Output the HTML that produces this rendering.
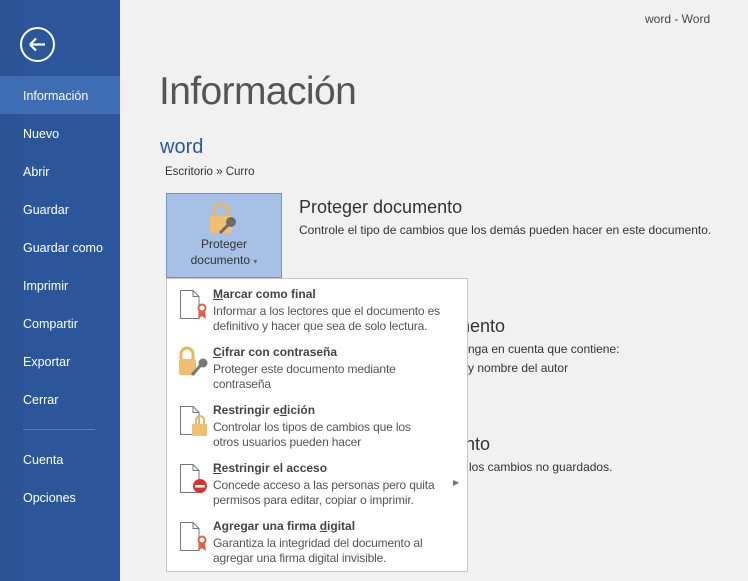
<!DOCTYPE html>
<html><head><meta charset="utf-8"><style>
*{margin:0;padding:0;box-sizing:border-box}
body{width:748px;height:581px;overflow:hidden;background:#f1f1f1;font-family:"Liberation Sans",sans-serif;position:relative;color:#444}
.side{position:absolute;left:0;top:0;width:120px;height:581px;background:#2b579a}
.side .strip{position:absolute;left:0;top:0;width:22px;height:581px;background:#2a5494}
.back{position:absolute;left:20px;top:27px;width:35px;height:35px;border:2px solid #fff;border-radius:50%}
.nav{position:absolute;left:23px;color:#fff;font-size:12.5px}
.act{position:absolute;left:0;top:76px;width:120px;height:38px;background:#3e6db4}
.sep{position:absolute;left:23px;top:429px;width:72px;height:1px;background:#5a7fbb}
.a{position:absolute;white-space:nowrap}
.btn{position:absolute;left:166px;top:193px;width:116px;height:85px;background:#a7c0e6;border:1px solid #6d93cf}
.menu{position:absolute;left:166px;top:278px;width:302px;height:294px;background:#fff;border:1px solid #c6c6c6}
.t{font-size:12px;font-weight:bold;color:#444}
.d{font-size:12px;color:#555;line-height:15px;letter-spacing:-0.15px}
</style></head><body>
<div class="side"><div class="strip"></div>
<div class="act"></div>
<div class="back"><svg width="31" height="31" viewBox="0 0 31 31"><path d="M8 15.5H23M8 15.5L14 9.5M8 15.5L14 21.5" stroke="#fff" stroke-width="2.2" fill="none"/></svg></div>
<div class="nav" style="top:89px">Información</div>
<div class="nav" style="top:127px">Nuevo</div>
<div class="nav" style="top:165px">Abrir</div>
<div class="nav" style="top:203px">Guardar</div>
<div class="nav" style="top:241px">Guardar como</div>
<div class="nav" style="top:279px">Imprimir</div>
<div class="nav" style="top:317px">Compartir</div>
<div class="nav" style="top:355px">Exportar</div>
<div class="nav" style="top:393px">Cerrar</div>
<div class="sep"></div>
<div class="nav" style="top:453px">Cuenta</div>
<div class="nav" style="top:491px">Opciones</div>
</div>
<div class="a" style="left:645px;top:12px;font-size:12px;color:#444">word - Word</div>
<div class="a" style="left:159px;top:70px;font-size:39px;color:#555;letter-spacing:-0.6px">Información</div>
<div class="a" style="left:160px;top:136px;font-size:20px;color:#2b579a">word</div>
<div class="a" style="left:165px;top:166px;font-size:11.5px;color:#333">Escritorio » Curro</div>
<div class="btn">
<svg style="position:absolute;left:38px;top:8px" width="36" height="34" viewBox="0 0 36 34"><path d="M9 14V9a7 7 0 0 1 14 0v5" stroke="#e8b860" stroke-width="3" fill="none"/><rect x="5" y="14" width="22" height="17" rx="2" fill="#f0c070"/><circle cx="26" cy="20" r="5" fill="#6b6b6b"/><path d="M23 23L15 31" stroke="#6b6b6b" stroke-width="3"/></svg>
<div class="a" style="left:0;width:114px;text-align:center;top:42px;font-size:12px;color:#333;line-height:16px">Proteger<br>documento <span style="font-size:8px;color:#666">▾</span></div>
</div>
<div class="a" style="left:299px;top:197px;font-size:18px;color:#333">Proteger documento</div>
<div class="a" style="left:299px;top:223px;font-size:12px;color:#333">Controle el tipo de cambios que los demás pueden hacer en este documento.</div>
<div class="a" style="left:455px;top:316px;font-size:18px;color:#333">mento</div>
<div class="a" style="left:458px;top:342px;font-size:12px;color:#333">tenga en cuenta que contiene:</div>
<div class="a" style="left:458px;top:361px;font-size:12px;color:#333">o y nombre del autor</div>
<div class="a" style="left:455px;top:434px;font-size:18px;color:#333">ento</div>
<div class="a" style="left:455px;top:460px;font-size:12px;color:#333">ar los cambios no guardados.</div>
<div class="menu">
<svg style="position:absolute;left:12px;top:10px" width="30" height="280" viewBox="0 0 30 280">
<g fill="none" stroke="#777" stroke-width="1"><path d="M1.5 1.5H14L20 7.5V29.5H1.5Z M14 1.5V7.5H20"/>
<path d="M1.5 117.5H14L20 123.5V145.5H1.5Z M14 117.5V123.5H20"/>
<path d="M1.5 175.5H14L20 181.5V203.5H1.5Z M14 175.5V181.5H20"/>
<path d="M1.5 233.5H14L20 239.5V261.5H1.5Z M14 233.5V239.5H20"/></g>
<g fill="#e06040"><circle cx="23" cy="19" r="3.5" fill="none" stroke="#e06040" stroke-width="2"/><path d="M20 22L19 30L23 27L27 30L26 22Z"/>
<circle cx="23" cy="251" r="3.5" fill="none" stroke="#e06040" stroke-width="2"/><path d="M20 254L19 262L23 259L27 262L26 254Z"/></g>
<path d="M2 70V65a6 6 0 0 1 12 0v5" stroke="#e8b860" stroke-width="3" fill="none"/><rect x="0" y="70" width="17" height="16" rx="2" fill="#f0c070"/><circle cx="24" cy="74" r="4.5" fill="#777"/><path d="M21 77L13 86" stroke="#777" stroke-width="3"/>
<path d="M17 135V131a4 4 0 0 1 8 0v4" stroke="#e8b860" stroke-width="2" fill="none"/><rect x="13" y="135" width="15" height="12" rx="1" fill="#f0c070"/>
<circle cx="21" cy="197" r="7" fill="#d9342b"/><rect x="16" y="196" width="10" height="2.5" fill="#fff"/>
</svg>
<div class="a t" style="left:46px;top:8px"><u>M</u>arcar como final</div>
<div class="a d" style="left:46px;top:25px">Informar a los lectores que el documento es<br>definitivo y hacer que sea de solo lectura.</div>
<div class="a t" style="left:46px;top:66px"><u>C</u>ifrar con contraseña</div>
<div class="a d" style="left:46px;top:83px">Proteger este documento mediante<br>contraseña</div>
<div class="a t" style="left:46px;top:124px">Restringir e<u>d</u>ición</div>
<div class="a d" style="left:46px;top:141px">Controlar los tipos de cambios que los<br>otros usuarios pueden hacer</div>
<div class="a t" style="left:46px;top:182px"><u>R</u>estringir el acceso</div>
<div class="a d" style="left:46px;top:199px">Concede acceso a las personas pero quita<br>permisos para editar, copiar o imprimir.</div>
<div class="a" style="left:286px;top:199px;font-size:8px;color:#777">▶</div>
<div class="a t" style="left:46px;top:240px">Agregar una firma <u>d</u>igital</div>
<div class="a d" style="left:46px;top:257px">Garantiza la integridad del documento al<br>agregar una firma digital invisible.</div>
</div>
</body></html>
